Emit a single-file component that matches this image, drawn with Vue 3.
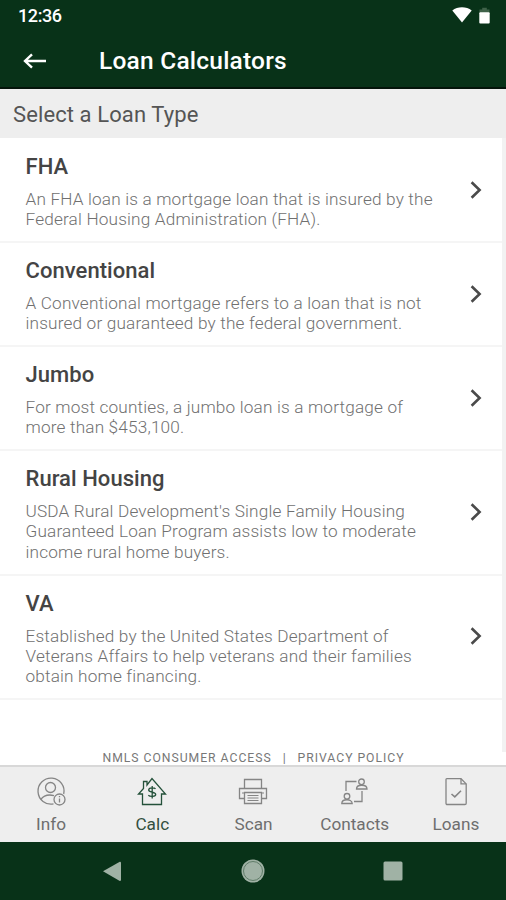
<template>
  <div class="screen">
    <header class="top">
      <div class="status-bar">
        <span class="clock">12:36</span>
        <div class="status-icons">
          <svg class="wifi" width="20" height="16" viewBox="0 0 20 16">
            <path d="M0.3 3.6C5.5-0.8 14.5-0.8 19.700 3.600L10 15.500Z" fill="#fff" />
          </svg>
          <svg class="battery" width="11" height="17" viewBox="0 0 11 17">
            <path d="M0.500 2.600h2.700V0.800h4.600v1.800h2.700V6H.5z" fill="#3f6249" />
            <rect x="0.300" y="5.300" width="10.400" height="11.200" rx="1" fill="#fff" />
          </svg>
        </div>
      </div>
      <div class="app-bar">
        <svg class="back" width="24" height="18" viewBox="0 0 24 18">
          <path d="M23 9H2M9 2.300L2 9l7 6.700" fill="none" stroke="#fff" stroke-width="2.400" />
        </svg>
        <h1>Loan Calculators</h1>
      </div>
    </header>

    <h2 class="section-title">Select a Loan Type</h2>

    <main class="content">
      <ul class="loan-list">
        <li v-for="loan in loans" :key="loan.name" class="loan">
          <div class="loan-text">
            <h3>{{ loan.name }}</h3>
            <p>
              <span v-for="line in loan.lines" :key="line">{{ line }}</span>
            </p>
          </div>
          <svg class="chevron" width="12" height="18" viewBox="0 0 12 18">
            <path d="M1.6 1.2L9.6 9l-8 7.8" fill="none" stroke="#4a4a4a" stroke-width="2.6" />
          </svg>
        </li>
      </ul>
      <div class="scrollbar"></div>
    </main>

    <div class="legal">
      <span>NMLS CONSUMER ACCESS</span>
      <span class="pipe">|</span>
      <span>PRIVACY POLICY</span>
    </div>

    <nav class="tabs">
      <button
        v-for="tab in tabs"
        :key="tab.id"
        class="tab"
        :class="{ active: tab.id === activeTab }"
        @click="activeTab = tab.id"
      >
        <svg width="32" height="30" viewBox="0 0 32 30" fill="none" stroke="currentColor" stroke-width="1.3">
          <g v-if="tab.id === 'info'">
            <path d="M18.5 26.9A13 13 0 1 1 28.7 17" />
            <circle cx="15.5" cy="10.5" r="5" />
            <path d="M5.8 22.5C9 18 14.5 17.5 19 18.6" />
            <circle cx="24.5" cy="22.5" r="5.5" />
            <path d="M24.5 21.5v4M24.5 19v1.2" />
          </g>
          <g v-else-if="tab.id === 'calc'">
            <path d="M6.5 17H2.5L7.5 11.5V4.5h3.5v3.5L16 1.500 29.500 17H25.500v10.500H6.500z" />
            <path d="M19.500 12c-1-1.600-6.800-1.600-6.800 1 0 2.800 7 1.400 7 4.400 0 2.400-5.700 2.400-7.400.8M16.200 9v12.500" />
          </g>
          <g v-else-if="tab.id === 'scan'">
            <path d="M7.500 11.500V2.500h17v9" />
            <path d="M7 21.500H2.500V11.500h27v10H25" />
            <path d="M7.500 15.500h17v11h-17z" />
            <path d="M5 16h2.500M24.500 16h2.500M10.500 18.500h11M10.500 21h11M10.500 23.500h11" stroke-width="1" />
          </g>
          <g v-else-if="tab.id === 'contacts'">
            <path d="M7 14V4.500h10.500M15 24.500h8V14" />
            <circle cx="22.500" cy="4.800" r="2.800" />
            <path d="M17.500 12c0-5 10.500-5 10.500 0z" />
            <circle cx="8" cy="19.300" r="2.800" />
            <path d="M2.800 26.500c0-5 10.400-5 10.400 0z" />
          </g>
          <g v-else>
            <path d="M6 2.500q0-.8.800-.8H21l5.200 5.200v19.300q0 1.300-1.300 1.300H7.300Q6 27.500 6 26.200z" />
            <path d="M21 1.700v5.200h5.200" />
            <path d="M11.500 17l3.300 2.800 6.200-6" stroke-width="1.600" />
          </g>
        </svg>
        <span>{{ tab.label }}</span>
      </button>
    </nav>

    <footer class="system-nav">
      <svg width="24" height="24" viewBox="0 0 24 24">
        <path d="M2 12.200L18.800 2.800q1.200-.2 1.200 1V21q0 1-1.200 1z" fill="#a0b2a5" />
      </svg>
      <svg width="24" height="24" viewBox="0 0 24 24">
        <circle cx="12" cy="12" r="11.500" fill="#a0b2a5" />
        <circle cx="12" cy="12" r="9.500" fill="none" stroke="#5f7c68" stroke-width="1" />
      </svg>
      <svg width="24" height="24" viewBox="0 0 24 24">
        <rect x="2.500" y="2.500" width="19" height="19" rx="1.500" fill="#a0b2a5" />
      </svg>
    </footer>
  </div>
</template>

<script setup>
import { ref } from 'vue'

const activeTab = ref('calc')

const tabs = [
  { id: 'info', label: 'Info' },
  { id: 'calc', label: 'Calc' },
  { id: 'scan', label: 'Scan' },
  { id: 'contacts', label: 'Contacts' },
  { id: 'loans', label: 'Loans' }
]

const loans = [
  {
    name: 'FHA',
    lines: ['An FHA loan is a mortgage loan that is insured by the', 'Federal Housing Administration (FHA).']
  },
  {
    name: 'Conventional',
    lines: ['A Conventional mortgage refers to a loan that is not', 'insured or guaranteed by the federal government.']
  },
  {
    name: 'Jumbo',
    lines: ['For most counties, a jumbo loan is a mortgage of', 'more than $453,100.']
  },
  {
    name: 'Rural Housing',
    lines: [
      "USDA Rural Development's Single Family Housing",
      'Guaranteed Loan Program assists low to moderate',
      'income rural home buyers.'
    ]
  },
  {
    name: 'VA',
    lines: [
      'Established by the United States Department of',
      'Veterans Affairs to help veterans and their families',
      'obtain home financing.'
    ]
  }
]
</script>

<style>
body {
  margin: 0;
}
</style>

<style scoped>
.screen {
  display: flex;
  flex-direction: column;
  width: 506px;
  height: 900px;
  overflow: hidden;
  background: #fff;
  font-family: Roboto, "Liberation Sans", sans-serif;
}
h1, h2, h3, p, ul {
  margin: 0;
  padding: 0;
}
.top {
  box-sizing: border-box;
  height: 89px;
  background: #083218;
  border-bottom: 2px solid #04140a;
  color: #fff;
}
.status-bar {
  display: flex;
  justify-content: space-between;
  height: 32px;
  padding: 0 16px 0 18px;
}
.clock {
  font-size: 18px;
  font-weight: 500;
  line-height: 32px;
  letter-spacing: -0.4px;
}
.status-icons {
  display: flex;
  gap: 7px;
  padding-top: 7px;
}
.app-bar {
  display: flex;
  align-items: center;
  height: 57px;
  padding-left: 23px;
}
.app-bar h1 {
  margin-left: 52px;
  font-size: 24.5px;
  font-weight: 500;
  line-height: 28px;
  letter-spacing: 0.22px;
}
.section-title {
  height: 49px;
  padding-left: 13px;
  background: #eee;
  color: #555;
  font-size: 22px;
  font-weight: 400;
  line-height: 52px;
  letter-spacing: 0.1px;
}
.content {
  display: flex;
  height: 614px;
}
.loan-list {
  flex: 1;
  padding-top: 1px;
  list-style: none;
}
.loan {
  box-sizing: border-box;
  display: flex;
  align-items: center;
  justify-content: space-between;
  padding: 14px 20px 11.8px 25.5px;
  border-bottom: 2px solid #f5f5f5;
}
.loan h3 {
  margin-bottom: 8px;
  color: #444;
  font-size: 22px;
  font-weight: 500;
  line-height: 28px;
  letter-spacing: 0.05px;
}
.loan p span {
  display: block;
  color: #707070;
  font-size: 17.2px;
  font-weight: 300;
  line-height: 20.15px;
  letter-spacing: 0.17px;
  white-space: nowrap;
}
.chevron {
  margin-bottom: 3px;
}
.scrollbar {
  width: 4px;
  background: #f2f2f2;
}
.legal {
  display: flex;
  justify-content: center;
  height: 13px;
  padding-left: 1px;
  color: #777;
  font-size: 12.2px;
  line-height: 12px;
  letter-spacing: 0.98px;
}
.pipe {
  margin: 0 11px;
}
.tabs {
  box-sizing: border-box;
  display: grid;
  grid-template-columns: repeat(5, 1fr);
  height: 77px;
  background: #eee;
  border-top: 2px solid #d8d8d8;
}
.tab {
  display: flex;
  flex-direction: column;
  align-items: center;
  padding: 10px 0 0 1px;
  border: 0;
  background: none;
  color: #858585;
  font-family: inherit;
  font-size: 17.2px;
  cursor: pointer;
}
.tab span {
  margin-top: 7px;
  color: #6e6e6e;
  line-height: 20px;
}
.tab.active {
  color: #24513a;
}
.tab.active span {
  color: #33503f;
}
.system-nav {
  display: flex;
  justify-content: center;
  gap: 116px;
  height: 58px;
  padding-top: 17px;
  box-sizing: border-box;
  background: #083218;
}
</style>
